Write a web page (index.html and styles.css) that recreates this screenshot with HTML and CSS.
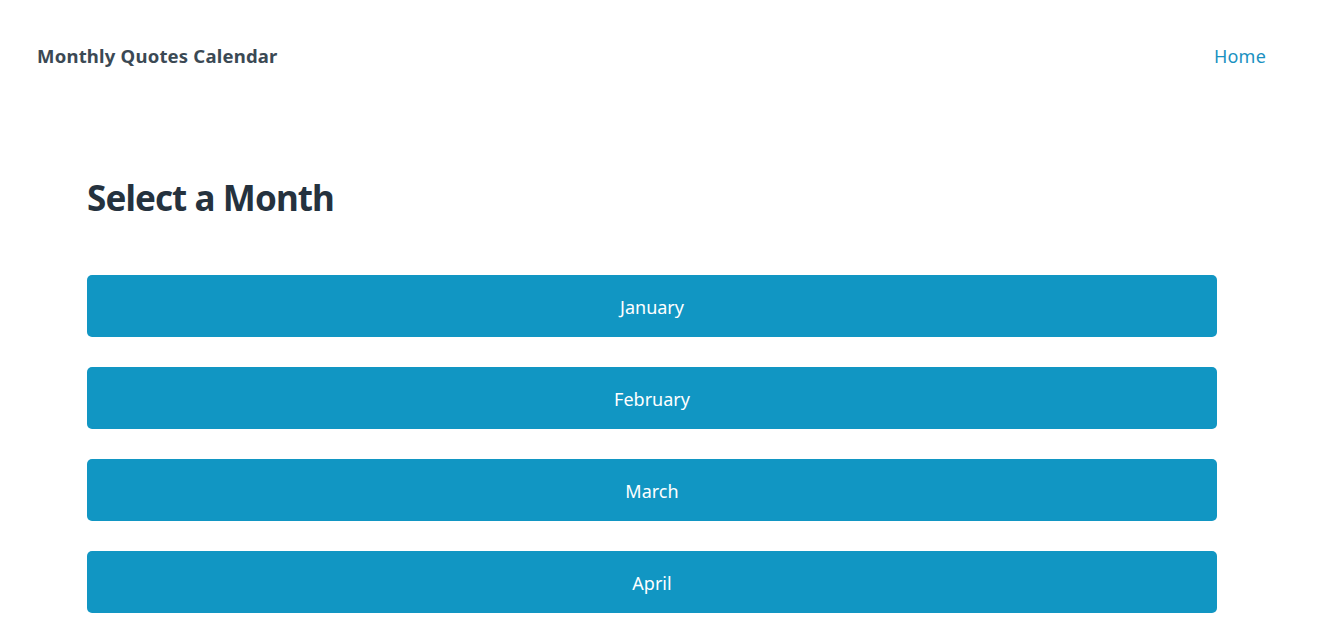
FILE: index.html
```html
<!DOCTYPE html>
<html lang="en">
<head>
<meta charset="utf-8">
<title>Monthly Quotes Calendar</title>
<link rel="stylesheet" href="styles.css">
</head>
<body>
<header class="topbar">
  <a class="brand" href="#">Monthly Quotes Calendar</a>
  <nav class="nav"><a class="nav-link" href="#">Home</a></nav>
</header>
<main class="content">
  <h1 class="title">Select a Month</h1>
  <div class="months">
    <button class="month-btn">January</button>
    <button class="month-btn">February</button>
    <button class="month-btn">March</button>
    <button class="month-btn">April</button>
  </div>
</main>
</body>
</html>
```
FILE: styles.css
```css
html, body {
  margin: 0;
  padding: 0;
  background: #ffffff;
  font-family: "Noto Sans", "Open Sans", "Liberation Sans", sans-serif;
  overflow: hidden;
}
.topbar {
  display: flex;
  justify-content: space-between;
  align-items: center;
  height: 111px;
  padding: 0 62px 0 37px;
}
.brand {
  font-size: 18.5px;
  font-weight: 700;
  color: #3b4954;
  text-decoration: none;
  letter-spacing: 0.2px;
}
.nav-link {
  font-size: 18px;
  color: #1a91c1;
  text-decoration: none;
  letter-spacing: 0.2px;
}
.content {
  width: 1130px;
  margin-left: 87px;
}
.title {
  margin: 65px 0 56px;
  font-size: 35px;
  line-height: 43px;
  font-weight: 700;
  color: #25323e;
  letter-spacing: -0.9px;
}
.months {
  display: flex;
  flex-direction: column;
  gap: 30px;
}
.month-btn {
  display: block;
  width: 100%;
  height: 62px;
  padding: 2px 0 0;
  border: none;
  border-radius: 5px;
  background: #1196c3;
  color: #ffffff;
  font-family: inherit;
  font-size: 18px;
  cursor: pointer;
}
```
